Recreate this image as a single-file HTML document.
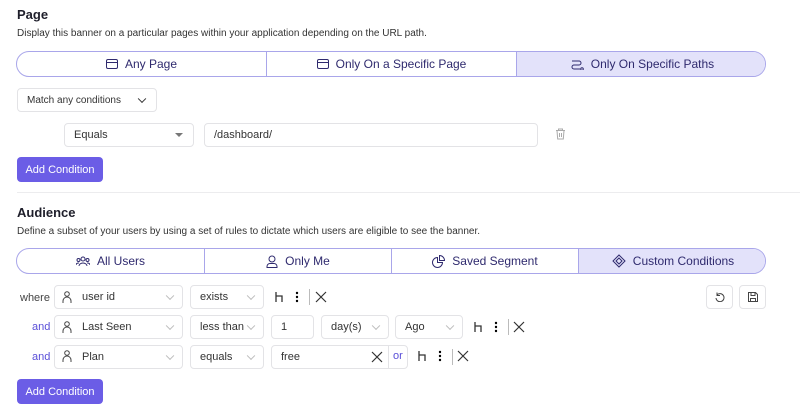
<!DOCTYPE html>
<html><head><style>
*{box-sizing:border-box;margin:0;padding:0}
body{width:800px;height:412px;background:#fff;font-family:"Liberation Sans",sans-serif;color:#222;position:relative;overflow:hidden}
.a{position:absolute}
h2{position:absolute;font-size:13px;font-weight:bold;color:#1e1e2a}
.d{position:absolute;font-size:10px;color:#333}
.seg{position:absolute;border:1px solid #a9a6ea;border-radius:13px;overflow:hidden;display:flex}
.seg div{flex:none;display:flex;align-items:center;justify-content:center;gap:7px;font-size:12px;color:#2f2a6e;border-right:1px solid #a9a6ea;height:100%}
.seg div:last-child{border-right:none;background:#e3e2fa}
.box{position:absolute;border:1px solid #e3e3e6;border-radius:4px;background:#fff;font-size:11px;color:#333;display:flex;align-items:center;padding-left:9px}
.chev{position:absolute;right:9px;top:50%;width:6px;height:6px;border-right:1px solid #bbb;border-bottom:1px solid #bbb;transform:translateY(-70%) rotate(45deg)}
.btn{position:absolute;background:#6b5de6;color:#fff;font-size:11px;border-radius:4px;display:flex;align-items:center;justify-content:center}
.lbl{position:absolute;font-size:11px}
.ic{position:absolute;font-size:12px;color:#333}
.vl{position:absolute;width:1px;height:16px;background:#bbb}
.ib{position:absolute;border:1px solid #e3e3e6;border-radius:4px;width:27px;height:24px}
</style></head><body>
<h2 style="left:17px;top:7px">Page</h2>
<div class="d" style="left:17px;top:28px">Display this banner on a particular pages within your application depending on the URL path.</div>
<div class="seg" style="left:16px;top:51px;width:750px;height:26px">
<div style="width:250px"><svg width="12" height="10"><rect x=".5" y=".5" width="11" height="9" rx="1.5" fill="none" stroke="#2f2a6e"/><line x1="0" y1="3.5" x2="12" y2="3.5" stroke="#2f2a6e"/></svg>Any Page</div>
<div style="width:250px"><svg width="12" height="10"><rect x=".5" y=".5" width="11" height="9" rx="1.5" fill="none" stroke="#2f2a6e"/><line x1="0" y1="3.5" x2="12" y2="3.5" stroke="#2f2a6e"/></svg>Only On a Specific Page</div>
<div style="width:250px"><svg width="14" height="12"><path d="M2 3h7a2 2 0 0 1 0 4H4a2 2 0 0 0 0 4h6" fill="none" stroke="#2f2a6e"/><circle cx="12" cy="11" r="1.3" fill="none" stroke="#2f2a6e"/></svg>Only On Specific Paths</div>
</div>
<div class="box" style="left:17px;top:88px;width:140px;height:24px;font-size:10px">Match any conditions<span class="chev" style="border-color:#333;right:11px"></span></div>
<div class="box" style="left:64px;top:123px;width:130px;height:24px">Equals<span class="a" style="right:10px;top:9px;border:4px solid transparent;border-top:4px solid #777"></span></div>
<div class="box" style="left:204px;top:123px;width:334px;height:24px">/dashboard/</div>
<svg class="a" style="left:555px;top:128px" width="11" height="12"><path d="M1 2.5h9M3.5 2.5V1h4v1.5M2 2.5l.7 8.5h5.6L9 2.5M4.5 5v4M6.5 5v4" fill="none" stroke="#aaa"/></svg>
<div class="btn" style="left:17px;top:157px;width:86px;height:25px">Add Condition</div>
<div class="a" style="left:17px;top:192px;width:783px;height:1px;background:#ececee"></div>
<h2 style="left:17px;top:205px">Audience</h2>
<div class="d" style="left:17px;top:226px">Define a subset of your users by using a set of rules to dictate which users are eligible to see the banner.</div>
<div class="seg" style="left:16px;top:248px;width:750px;height:26px">
<div style="width:188px"><svg width="14" height="11"><circle cx="7" cy="3" r="2" fill="none" stroke="#2f2a6e"/><circle cx="2.5" cy="4" r="1.5" fill="none" stroke="#2f2a6e"/><circle cx="11.5" cy="4" r="1.5" fill="none" stroke="#2f2a6e"/><path d="M3 10a4 3 0 0 1 8 0M0 9a2.5 2 0 0 1 3-2M14 9a2.5 2 0 0 0-3-2" fill="none" stroke="#2f2a6e"/></svg>All Users</div>
<div style="width:187px"><svg width="12" height="13"><circle cx="6" cy="4" r="3" fill="none" stroke="#2f2a6e"/><path d="M1 12.5v-1a3 3 0 0 1 3-3h4a3 3 0 0 1 3 3v1z" fill="none" stroke="#2f2a6e"/></svg>Only Me</div>
<div style="width:187px"><svg width="13" height="13"><path d="M5.5 2.5a5 5 0 1 0 5 5h-5z" fill="none" stroke="#2f2a6e"/><path d="M7.5.5a5 5 0 0 1 5 5h-5z" fill="none" stroke="#2f2a6e"/></svg>Saved Segment</div>
<div style="width:188px"><svg width="14" height="14"><path d="M7 1l6 6-6 6-6-6z M7 4l3 3-3 3-3-3z" fill="none" stroke="#2f2a6e"/></svg>Custom Conditions</div>
</div>
<div class="lbl" style="left:20px;top:292px;color:#444">where</div>
<div class="lbl" style="left:32px;top:321px;color:#5a4fd8">and</div>
<div class="lbl" style="left:32px;top:351px;color:#5a4fd8">and</div>
<div class="box" style="left:54px;top:285px;width:129px;height:24px;padding-left:27px">user id<span class="chev"></span></div>
<div class="box" style="left:54px;top:315px;width:129px;height:24px;padding-left:27px">Last Seen<span class="chev"></span></div>
<div class="box" style="left:54px;top:345px;width:129px;height:24px;padding-left:27px">Plan<span class="chev"></span></div>
<svg class="a" style="left:62px;top:291px" width="10" height="12"><circle cx="5" cy="3" r="2.3" fill="none" stroke="#444"/><path d="M1 12V10a4 4 0 0 1 8 0v2" fill="none" stroke="#444"/></svg>
<svg class="a" style="left:62px;top:321px" width="10" height="12"><circle cx="5" cy="3" r="2.3" fill="none" stroke="#444"/><path d="M1 12V10a4 4 0 0 1 8 0v2" fill="none" stroke="#444"/></svg>
<svg class="a" style="left:62px;top:350px" width="10" height="12"><circle cx="5" cy="3" r="2.3" fill="none" stroke="#444"/><path d="M1 12V10a4 4 0 0 1 8 0v2" fill="none" stroke="#444"/></svg>
<div class="box" style="left:190px;top:285px;width:74px;height:24px">exists<span class="chev"></span></div>
<div class="box" style="left:190px;top:315px;width:74px;height:24px">less than<span class="chev"></span></div>
<div class="box" style="left:190px;top:345px;width:74px;height:24px">equals<span class="chev"></span></div>
<div class="box" style="left:271px;top:315px;width:43px;height:24px">1</div>
<div class="box" style="left:321px;top:315px;width:68px;height:24px">day(s)<span class="chev"></span></div>
<div class="box" style="left:395px;top:315px;width:68px;height:24px">Ago<span class="chev"></span></div>
<div class="box" style="left:271px;top:345px;width:137px;height:24px;border-radius:4px">free<span class="a" style="left:116px;top:0;width:1px;height:22px;background:#e3e3e6"></span><span class="a" style="left:121px;top:4px;color:#5a4fd8">or</span></div>
<svg class="a" style="left:371px;top:351px" width="12" height="12"><path d="M1 1l10 10M11 1L1 11" stroke="#333" stroke-width="1.2"/></svg>
<svg class="a" style="left:275px;top:292px" width="9" height="10"><path d="M1 0v10M1 4h6v6" fill="none" stroke="#333" stroke-width="1.3"/></svg>
<svg class="a" style="left:474px;top:322px" width="9" height="10"><path d="M1 0v10M1 4h6v6" fill="none" stroke="#333" stroke-width="1.3"/></svg>
<svg class="a" style="left:418px;top:351px" width="9" height="10"><path d="M1 0v10M1 4h6v6" fill="none" stroke="#333" stroke-width="1.3"/></svg>
<svg class="a" style="left:295px;top:291px" width="4" height="12"><circle cx="2" cy="2" r="1.2"/><circle cx="2" cy="6" r="1.2"/><circle cx="2" cy="10" r="1.2"/></svg>
<svg class="a" style="left:494px;top:321px" width="4" height="12"><circle cx="2" cy="2" r="1.2"/><circle cx="2" cy="6" r="1.2"/><circle cx="2" cy="10" r="1.2"/></svg>
<svg class="a" style="left:438px;top:350px" width="4" height="12"><circle cx="2" cy="2" r="1.2"/><circle cx="2" cy="6" r="1.2"/><circle cx="2" cy="10" r="1.2"/></svg>
<div class="vl" style="left:309px;top:289px"></div>
<div class="vl" style="left:508px;top:319px"></div>
<div class="vl" style="left:452px;top:349px"></div>
<svg class="a" style="left:315px;top:291px" width="12" height="12"><path d="M1 1l10 10M11 1L1 11" stroke="#333" stroke-width="1.2"/></svg>
<svg class="a" style="left:513px;top:321px" width="12" height="12"><path d="M1 1l10 10M11 1L1 11" stroke="#333" stroke-width="1.2"/></svg>
<svg class="a" style="left:457px;top:350px" width="12" height="12"><path d="M1 1l10 10M11 1L1 11" stroke="#333" stroke-width="1.2"/></svg>
<div class="ib" style="left:706px;top:285px"><svg class="a" style="left:8px;top:6px" width="10" height="10"><path d="M2 3a4 4 0 1 1-1 3M2 0.5v3h3" fill="none" stroke="#444"/></svg></div>
<div class="ib" style="left:739px;top:285px"><svg class="a" style="left:8px;top:6px" width="10" height="10"><path d="M.5.5h7l2 2v7h-9z M3 .5v3h4v-3 M2.5 9.5v-3h5v3" fill="none" stroke="#444"/></svg></div>
<div class="btn" style="left:17px;top:379px;width:86px;height:25px">Add Condition</div>
</body></html>
